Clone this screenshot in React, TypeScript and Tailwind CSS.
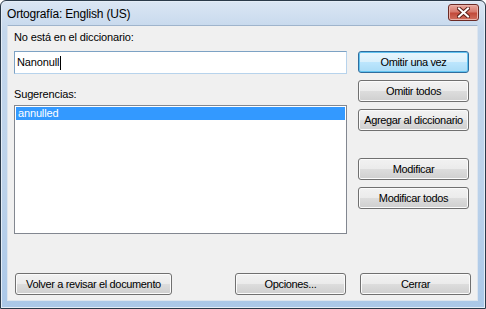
import React from 'react';

const font = "font-['Liberation_Sans',Arial,sans-serif]";

const Btn = ({ label, className = '', primary = false }: { label: string; className?: string; primary?: boolean }) => (
  <div
    className={`h-[22px] flex items-center justify-center whitespace-nowrap rounded-[3px] border text-[11px] tracking-[-0.35px] text-black ${
      primary
        ? 'border-[#2f6d9e] bg-[linear-gradient(#e9f6fd_0%,#d9f0fc_50%,#bde6fd_50%,#a9dbf6_100%)] shadow-[inset_0_0_0_1px_#62c3f0]'
        : 'border-[#707070] bg-[linear-gradient(#f2f2f2_0%,#ebebeb_50%,#dddddd_50%,#cfcfcf_100%)] shadow-[inset_0_0_0_1px_#fbfbfb]'
    } ${className}`}
  >
    {label}
  </div>
);

const CloseButton = () => (
  <div className="w-[31px] h-[17px] rounded-[3px] border border-[#6b2a25] bg-[linear-gradient(#e8a89f_0%,#d77a6d_45%,#c24a3a_55%,#d0705f_100%)] shadow-[inset_0_0_0_1px_#eab3aa] flex items-center justify-center">
    <svg width="13" height="11" viewBox="0 0 13 11">
      <path d="M2 1.5 L11 9.5 M11 1.5 L2 9.5" stroke="#5b2019" strokeWidth="4" strokeLinecap="square" />
      <path d="M2 1.5 L11 9.5 M11 1.5 L2 9.5" stroke="#ffffff" strokeWidth="2" strokeLinecap="square" />
    </svg>
  </div>
);

export default function App() {
  return (
    <div className={`w-[486px] h-[309px] ${font}`}>
      <div className="w-full h-full flex flex-col border border-[#2b3a4a] rounded-t-[6px] bg-[linear-gradient(#dbe6f4_0%,#c4d7ec_10%,#bcd2ea_60%,#abc8e8_100%)] shadow-[inset_0_0_0_1px_#e4edf7]">
        {/* Title bar */}
        <div className="h-[24px] flex items-start justify-between">
          <span className="pl-[6px] pt-[6px] text-[12px] leading-[14px] tracking-[-0.2px] text-black">Ortografía: English (US)</span>
          <div className="pt-[3px] pr-[6px]">
            <CloseButton />
          </div>
        </div>

        {/* Client area */}
        <div className="ml-[6px] mr-[7px] h-[276px] bg-[#f0f0f0] border border-[#dde5ee] border-t-[#9fb4cc] flex flex-col">
          <div className="flex">
            <div className="ml-[6px] w-[333px] flex flex-col">
              <span className="mt-[5px] text-[11px] leading-[13px] tracking-[-0.15px] text-black">No está en el diccionario:</span>
              <div className="mt-[7px] h-[23px] border border-[#7da2c4] border-r-[#b7d3ec] border-b-[#b7d3ec] bg-white flex items-center pl-[2px] text-[11px] tracking-[-0.15px] text-black">
                <span>Nanonull</span>
                <span className="ml-[1px] w-px h-[14px] bg-black" />
              </div>
              <span className="mt-[14px] text-[11px] leading-[13px] tracking-[-0.15px] text-black">Sugerencias:</span>
              <div className="mt-[4px] h-[129px] border border-[#828790] bg-white p-px">
                <div className="h-[13px] bg-[#3399ff] text-white text-[11px] leading-[13px] tracking-[-0.15px] pl-[2px]">annulled</div>
              </div>
            </div>
            <div className="ml-[11px] w-[111px] pt-[25px] flex flex-col gap-[7px]">
              <Btn label="Omitir una vez" primary />
              <Btn label="Omitir todos" />
              <Btn label="Agregar al diccionario" />
              <Btn label="Modificar" className="mt-[20px]" />
              <Btn label="Modificar todos" />
            </div>
          </div>

          <div className="mt-[39px] flex">
            <Btn label="Volver a revisar el documento" className="ml-[7px] w-[157px]" />
            <Btn label="Opciones..." className="ml-[63px] w-[111px]" />
            <Btn label="Cerrar" className="ml-[14px] w-[111px]" />
          </div>
        </div>
      </div>
    </div>
  );
}
